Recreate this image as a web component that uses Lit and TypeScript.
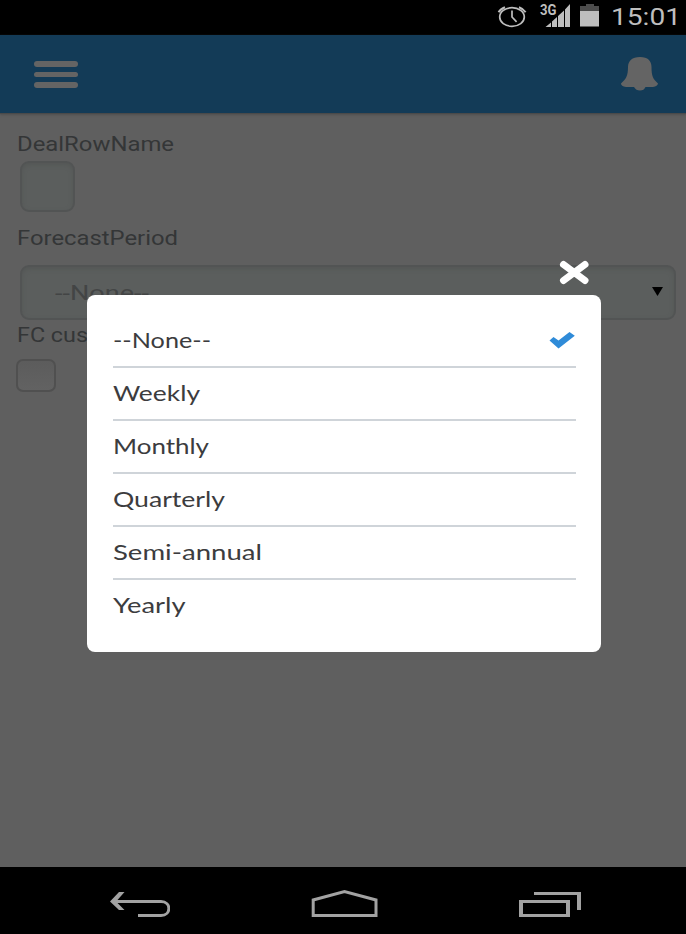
import { LitElement, html, svg, css } from "lit";
import { customElement, property } from "lit/decorators.js";

/** Single line of text fitted to an exact width. */
@customElement("wide-text")
class WideText extends LitElement {
  @property() text = "";
  @property({ type: Number }) width = 100;
  static styles = css`
    :host { display: block; height: 28px; }
    svg { display: block; overflow: visible; }
    text { fill: currentColor; white-space: pre; }
  `;
  render() {
    return html`<svg width=${this.width} height="28">
      ${svg`<text x="0" y="21" textLength=${this.width} lengthAdjust="spacingAndGlyphs">${this.text}</text>`}
    </svg>`;
  }
}

@customElement("status-bar")
class StatusBar extends LitElement {
  static styles = css`
    :host { display: flex; height: 35px; background: #000; color: #bebebe; justify-content: flex-end; padding-right: 5px; box-sizing: border-box; }
    .icons { display: block; width: 110px; height: 35px; margin-right: 7px; flex: none; }
    .gen { font: 700 14.5px Roboto, sans-serif; fill: #bebebe; }
    .clock { font: 400 24.5px Roboto, sans-serif; margin-top: 4px; }
  `;
  render() {
    return html`
      <svg class="icons" viewBox="494 0 110 35">
        <g fill="none" stroke="#bebebe" stroke-width="1.7">
          <ellipse cx="512" cy="17" rx="12.3" ry="9.3" />
          <path d="M512 10.5V17l4.6 4.8" />
          <path d="M498.6 12.3Q500.5 8.8 505 7.2M525.6 12.3Q523.5 8.8 519 7.2" stroke-width="2" />
        </g>
        <text class="gen" x="540" y="15" textLength="16.5" lengthAdjust="spacingAndGlyphs">3G</text>
        <path fill="#bebebe" d="M545.5 27L551 22.5V27zM552 27V21.5L557 17V27zM558 27V16L564 10.5V27zM565 27V9.5L570 4V27z" />
        <path fill="#4c4c4c" d="M580 11V6h6V4h8v2h5v5z" />
        <path fill="#bebebe" d="M580 11h19v15.5h-19z" />
      </svg>
      <wide-text class="clock" text="15:01" width="70"></wide-text>
    `;
  }
}

@customElement("top-bar")
class TopBar extends LitElement {
  static styles = css`
    :host { display: flex; justify-content: space-between; height: 79px; box-sizing: border-box; padding: 0 28px 0 34px; background: #133b57; border-bottom: 1px solid #4a4a4a; box-shadow: 0 1px 2px #505050; position: relative; }
    .menu { display: flex; flex-direction: column; gap: 5px; padding-top: 26px; }
    .line { width: 44px; height: 5.5px; border-radius: 3px; background: #646464; }
    .bell { width: 38px; height: 36px; margin-top: 21px; }
  `;
  render() {
    return html`
      <div class="menu"><div class="line"></div><div class="line"></div><div class="line"></div></div>
      <svg class="bell" viewBox="620 56 38 36">
        <path fill="#646464" d="M628 67C628 61 632 57 640 57S651.500 61 651.500 67C651.500 76 653 79 658 83.500Q657.500 86 653 87H645.500Q644 90.500 640 90.500T634 87H626Q621 86 621 83.500C626 79 628 76 628 67z" />
      </svg>
    `;
  }
}

@customElement("option-dialog")
class OptionDialog extends LitElement {
  private options: [string, number][] = [
    ["--None--", 98], ["Weekly", 87], ["Monthly", 96], ["Quarterly", 112], ["Semi-annual", 149], ["Yearly", 72.5],
  ];
  static styles = css`
    :host { display: block; width: 514px; }
    .close { display: block; width: 30px; height: 25px; margin: 0 12.5px 10px auto; }
    .panel { height: 357px; box-sizing: border-box; padding: 20px 25px 0 26px; border-radius: 8px; background: #fff; }
    .row { display: flex; justify-content: space-between; height: 53px; box-sizing: border-box; padding: 12px 1px 0 0; border-bottom: 2px solid #cfd4d9; color: #3c3c3e; font: 400 20.5px Lato, sans-serif; }
    .row:last-child { border: 0; }
    .check { width: 26px; height: 17px; margin: 5px 0 0; }
  `;
  render() {
    return html`
      <svg class="close" viewBox="0 0 30 25">
        <path d="M4.500 4.500L26 20.500M26 4.500L4.500 20.500" fill="none" stroke="#fff" stroke-width="7" stroke-linecap="round" />
      </svg>
      <div class="panel">
        ${this.options.map(([name, width], i) => html`
          <div class="row">
            <wide-text .text=${name} .width=${width}></wide-text>
            ${i === 0 ? html`<svg class="check" viewBox="0 0 26 17">
              <path fill="#2f8bd8" d="M.5 8.500L4.500 5L9.500 8.500L20.500 0L25.800 3.800L9.500 16.500z" />
            </svg>` : ""}
          </div>`)}
      </div>
    `;
  }
}

@customElement("nav-bar")
class NavBar extends LitElement {
  static styles = css`
    :host { display: flex; justify-content: space-between; height: 67px; box-sizing: border-box; padding: 22px 105px 0 110px; background: #000; }
    svg { display: block; height: 30px; fill: none; stroke: #a2a2a2; stroke-width: 3; }
    .back { width: 60px; }
    .home { width: 68px; }
    .recent { width: 62px; }
  `;
  render() {
    return html`
      <svg class="back" viewBox="110 889 60 30">
        <path d="M114 901.500H161C171.500 901.500 171.500 915.500 161 915.500H138" />
        <path fill="#a2a2a2" stroke="none" d="M110 901.500L119 892H124.500L117.500 900V903L124.500 910H119z" />
      </svg>
      <svg class="home" viewBox="310.500 889 68 30">
        <path d="M312.700 915.500V900L344 891.500L375.500 900V915.500z" />
      </svg>
      <svg class="recent" viewBox="519 889 62 30">
        <path fill="#a2a2a2" stroke="none" fill-rule="evenodd" d="M519 900H570V917H519zM523 903V914H566V903zM534 892H581V910H577V895H534z" />
      </svg>
    `;
  }
}

@customElement("app-root")
class AppRoot extends LitElement {
  static styles = css`
    :host { display: flex; flex-direction: column; height: 934px; width: 686px; position: relative; overflow: hidden; background: #5f5f5f; }
    .form { flex: 1; padding: 16px 10px 0 17px; color: #343637; font: 400 20px Roboto, sans-serif; }
    .field { box-sizing: border-box; border: 2px solid #525454; border-radius: 9px; background: #5b5e5d; box-shadow: inset 0 2px 4px #545756; }
    .small { width: 55px; height: 51px; margin: 3px 0 12px 3px; }
    .select { display: flex; justify-content: space-between; height: 55px; margin: 13px 0 0 3px; padding: 12px 11px 0 33px; color: #434545; font-size: 21px; }
    .arrow { width: 11px; height: 9px; margin-top: 8px; background: #000; clip-path: polygon(0 0, 100% 0, 50% 100%); }
    .box { width: 40px; height: 33px; margin: 10px 0 0 -1px; box-sizing: border-box; border: 2px solid #505050; border-radius: 7px; background: linear-gradient(#5c5c5c, #626262); }
    .caption { margin-top: 1px; }
    .dialog { position: absolute; left: 87px; top: 260px; }
  `;
  render() {
    return html`
      <status-bar></status-bar>
      <top-bar></top-bar>
      <div class="form">
        <wide-text text="DealRowName" width="157"></wide-text>
        <div class="field small"></div>
        <wide-text text="ForecastPeriod" width="161"></wide-text>
        <div class="field select">
          <wide-text text="--None--" width="94"></wide-text>
          <div class="arrow"></div>
        </div>
        <wide-text class="caption" text="FC cus" width="71"></wide-text>
        <div class="box"></div>
      </div>
      <nav-bar></nav-bar>
      <option-dialog class="dialog"></option-dialog>
    `;
  }
}
